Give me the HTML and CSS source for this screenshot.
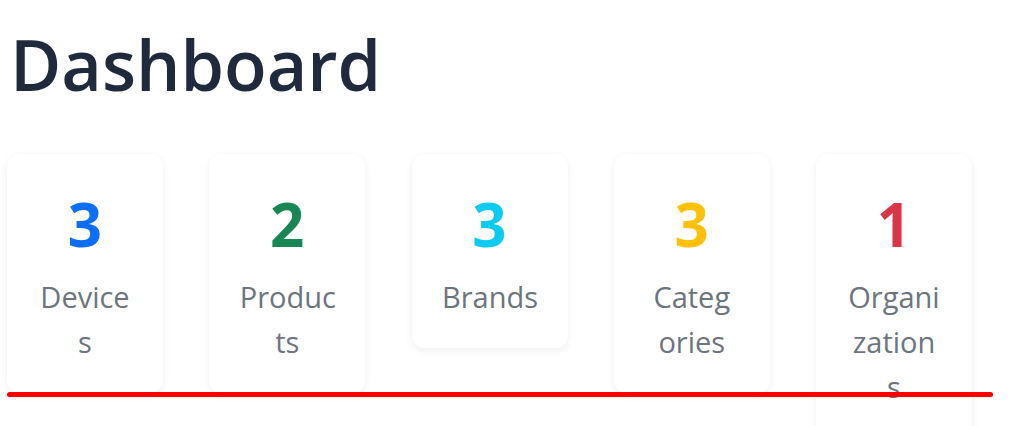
FILE: index.html
```html
<!DOCTYPE html>
<html lang="en">
<head>
<meta charset="utf-8">
<title>Dashboard</title>
<link rel="stylesheet" href="styles.css">
</head>
<body>
<main class="page">
  <h1 class="title">Dashboard</h1>
  <section class="stats">
    <div class="card">
      <div class="count count-blue">3</div>
      <div class="label">Device<wbr>s</div>
    </div>
    <div class="card">
      <div class="count count-green">2</div>
      <div class="label">Produc<wbr>ts</div>
    </div>
    <div class="card">
      <div class="count count-cyan">3</div>
      <div class="label">Brands</div>
    </div>
    <div class="card">
      <div class="count count-yellow">3</div>
      <div class="label">Categ<wbr>ories</div>
    </div>
    <div class="card">
      <div class="count count-red">1</div>
      <div class="label">Organi<wbr>zation<wbr>s</div>
    </div>
  </section>
</main>
<div class="markup-line"></div>
</body>
</html>
```
FILE: styles.css
```css
html, body {
  margin: 0;
  padding: 0;
  background: #ffffff;
}

body {
  font-family: "Open Sans", "Noto Sans", sans-serif;
  color: #212529;
  overflow: hidden;
}

.page {
  padding: 21px 7px 0 7px;
}

.title {
  margin: 0 0 0 3px;
  font-size: 70px;
  line-height: 87.6px;
  font-weight: 600;
  color: #1f2a3c;
}

.stats {
  display: flex;
  align-items: flex-start;
  gap: 46.25px;
  margin-top: 45px;
}

.card {
  flex: 0 0 156px;
  width: 156px;
  min-width: 0;
  max-width: 156px;
  box-sizing: border-box;
  padding: 34px 30.5px 29px;
  background: #ffffff;
  border-radius: 12px;
  box-shadow: 0 3px 10px rgba(0, 0, 0, 0.055), 0 0 2px rgba(0, 0, 0, 0.03);
  text-align: center;
}

.count {
  font-size: 60px;
  line-height: 72px;
  font-weight: 700;
}

.count-blue { color: #0d6efd; }
.count-green { color: #198754; }
.count-cyan { color: #0dcaf0; }
.count-yellow { color: #ffc107; }
.count-red { color: #dc3545; }

.label {
  margin-top: 14px;
  font-size: 29px;
  line-height: 45px;
  color: #6c757d;
}

.markup-line {
  position: absolute;
  left: 7px;
  top: 392px;
  width: 986px;
  height: 5px;
  border-radius: 3px;
  background: #ff0000;
  z-index: 2;
}
```
